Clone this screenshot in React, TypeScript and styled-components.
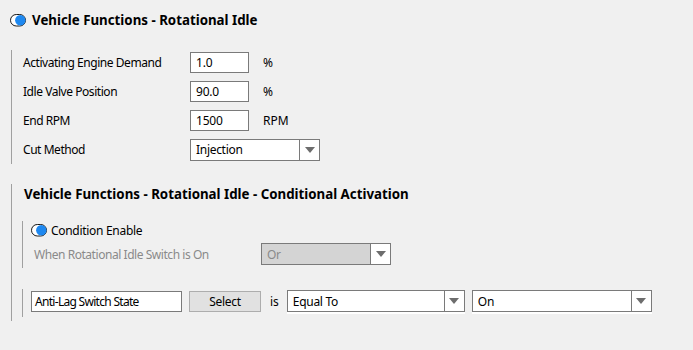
import React from "react";
import styled, { createGlobalStyle } from "styled-components";

const GlobalStyle = createGlobalStyle`
  body {
    margin: 0;
    background: #f0f0f0;
    font-family: "Noto Sans", "Open Sans", sans-serif;
    font-size: 12px;
    color: #000;
  }
`;

const Page = styled.div`
  width: 693px;
  height: 350px;
  padding-top: 12px;
  box-sizing: border-box;
`;

const Header = styled.div`
  display: flex;
  align-items: center;
  gap: 5px;
  padding-left: 10px;
  height: 16px;
`;

const Title = styled.h1`
  margin: 0;
  font-size: 13.3px;
  font-weight: 700;
  line-height: 16px;
  letter-spacing: 0;
`;

const Section = styled.div<{ $top: number; $pt: number; $pb: number }>`
  margin: ${(p) => p.$top}px 0 0 11px;
  border-left: 1px solid #a0a0a0;
  padding: ${(p) => p.$pt}px 0 ${(p) => p.$pb}px 11px;
`;

const Rows = styled.div`
  display: flex;
  flex-direction: column;
  gap: 8px;
`;

const Row = styled.div`
  display: flex;
  align-items: center;
  height: 21px;
`;

const Label = styled.span<{ $w: number; $muted?: boolean }>`
  width: ${(p) => p.$w}px;
  flex: none;
  color: ${(p) => (p.$muted ? "#8a8a8a" : "#000")};
  letter-spacing: -0.45px;
`;

const TextBox = styled.div<{ $w: number; $narrow?: boolean }>`
  width: ${(p) => p.$w}px;
  height: 21px;
  box-sizing: border-box;
  border: 1px solid #7a7a7a;
  background: #fff;
  display: flex;
  align-items: center;
  padding-left: ${(p) => (p.$narrow ? 3 : 5)}px;
  letter-spacing: ${(p) => (p.$narrow ? "-0.7px" : "-0.2px")};
`;

const Unit = styled.span`
  margin-left: 14px;
`;

const Combo = styled.div<{ $w: number; $strip?: boolean }>`
  width: ${(p) => p.$w}px;
  height: 22px;
  box-sizing: border-box;
  border: 1px solid #7a7a7a;
  background: #fff;
  display: flex;
  box-shadow: ${(p) => (p.$strip ? "0 2px 0 #fff" : "none")};
`;

const ComboText = styled.div<{ $disabled?: boolean }>`
  flex: 1;
  display: flex;
  align-items: center;
  padding-left: 5px;
  letter-spacing: -0.3px;
  background: ${(p) => (p.$disabled ? "#d4d4d4" : "#fff")};
  color: ${(p) => (p.$disabled ? "#8a8a8a" : "#000")};
`;

const ComboArrow = styled.div`
  width: 19px;
  flex: none;
  border-left: 1px solid #7a7a7a;
  display: flex;
  align-items: center;
  justify-content: center;
  background: #fff;
  &::after {
    content: "";
    border-left: 5px solid transparent;
    border-right: 5px solid transparent;
    border-top: 6px solid #6d6d6d;
  }
`;

const Group2Title = styled.div`
  padding-left: 1px;
`;

const Inner = styled.div<{ $top: number; $pt: number; $pb: number }>`
  margin: ${(p) => p.$top}px 0 0 -1px;
  border-left: 1px solid #a0a0a0;
  padding: ${(p) => p.$pt}px 0 ${(p) => p.$pb}px 0;
`;

const ToggleRow = styled.div`
  display: flex;
  align-items: center;
  gap: 3px;
  padding-left: 8px;
  height: 14px;
  letter-spacing: -0.3px;
`;

const WhenRow = styled.div`
  display: flex;
  align-items: center;
  padding-left: 11px;
  margin-top: 6px;
  height: 22px;
`;

const CondRow = styled.div`
  display: flex;
  align-items: center;
  padding-left: 8px;
  height: 22px;
`;

const SelectButton = styled.div`
  width: 72px;
  height: 21px;
  box-sizing: border-box;
  margin-left: 7px;
  background: #e1e1e1;
  border: 1px solid #adadad;
  display: flex;
  align-items: center;
  justify-content: center;
  letter-spacing: -0.3px;
`;

const Is = styled.span`
  margin: 0 8px 0 9px;
`;

const Spacer = styled.span`
  width: 7px;
  flex: none;
`;

const Toggle = () => (
  <svg width="17" height="13" viewBox="0 0 17 13">
    <rect x="0.5" y="0.5" width="15" height="11.5" rx="5.75" fill="#fff" stroke="#1a1a1a" />
    <circle cx="10.3" cy="6.25" r="5.2" fill="#1e88f0" />
  </svg>
);

const Dropdown = ({
  w,
  value,
  disabled,
  strip,
}: {
  w: number;
  value: string;
  disabled?: boolean;
  strip?: boolean;
}) => (
  <Combo $w={w} $strip={strip}>
    <ComboText $disabled={disabled}>{value}</ComboText>
    <ComboArrow />
  </Combo>
);

const fields = [
  { label: "Activating Engine Demand", value: "1.0", unit: "%" },
  { label: "Idle Valve Position", value: "90.0", unit: "%" },
  { label: "End RPM", value: "1500", unit: "RPM" },
];

export default function App() {
  return (
    <Page>
      <GlobalStyle />
      <Header>
        <Toggle />
        <Title>Vehicle Functions - Rotational Idle</Title>
      </Header>
      <Section $top={22} $pt={2} $pb={4}>
        <Rows>
          {fields.map((f) => (
            <Row key={f.label}>
              <Label $w={167}>{f.label}</Label>
              <TextBox $w={59}>{f.value}</TextBox>
              <Unit>{f.unit}</Unit>
            </Row>
          ))}
          <Row>
            <Label $w={167}>Cut Method</Label>
            <Dropdown w={130} value="Injection" />
          </Row>
        </Rows>
      </Section>
      <Section $top={20} $pt={2} $pb={4}>
        <Group2Title>
          <Title>Vehicle Functions - Rotational Idle - Conditional Activation</Title>
        </Group2Title>
        <Inner $top={19} $pt={2} $pb={3}>
          <ToggleRow>
            <Toggle />
            <span>Condition Enable</span>
          </ToggleRow>
          <WhenRow>
            <Label $w={227} $muted>
              When Rotational Idle Switch is On
            </Label>
            <Dropdown w={130} value="Or" disabled />
          </WhenRow>
        </Inner>
        <Inner $top={21} $pt={1} $pb={5}>
          <CondRow>
            <TextBox $w={151} $narrow>
              Anti-Lag Switch State
            </TextBox>
            <SelectButton>Select</SelectButton>
            <Is>is</Is>
            <Dropdown w={178} value="Equal To" strip />
            <Spacer />
            <Dropdown w={180} value="On" strip />
          </CondRow>
        </Inner>
      </Section>
    </Page>
  );
}
